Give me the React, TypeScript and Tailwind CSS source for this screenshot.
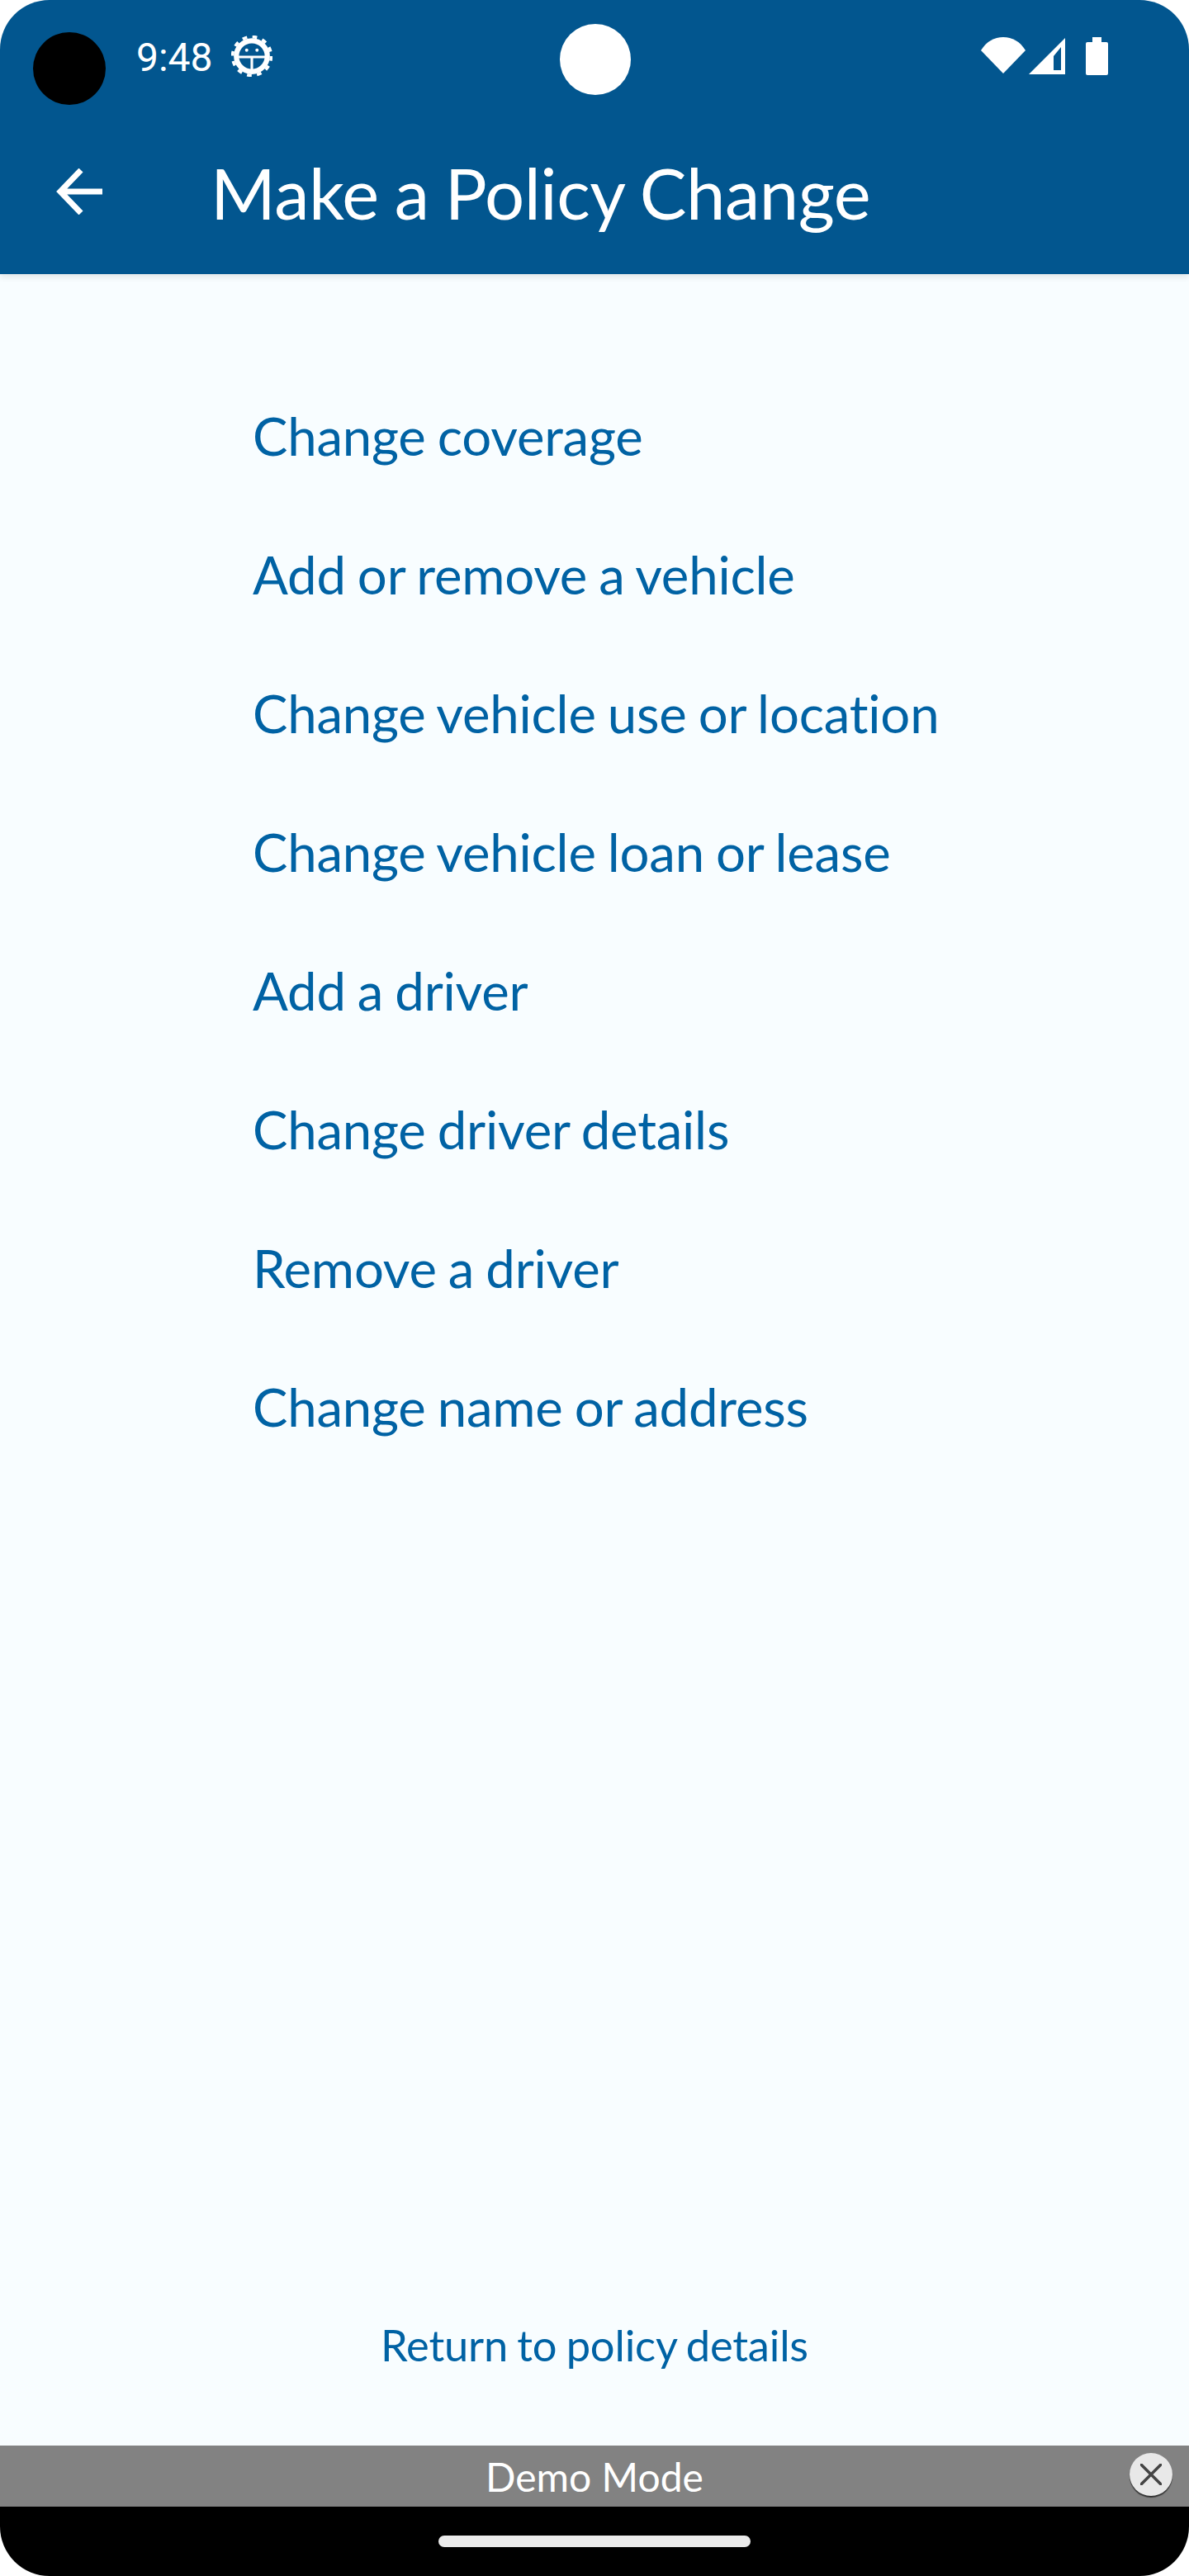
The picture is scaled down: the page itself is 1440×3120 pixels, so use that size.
const options = [
  "Change coverage",
  "Add or remove a vehicle",
  "Change vehicle use or location",
  "Change vehicle loan or lease",
  "Add a driver",
  "Change driver details",
  "Remove a driver",
  "Change name or address",
];

// android "bug report" status icon
const GearBug = () => (
  <svg viewBox="0 0 48 48" className="h-[50px] w-[50px]" fill="none" stroke="white">
    <circle cx="24" cy="24" r="18" strokeWidth="6" />
    <circle cx="24" cy="24" r="22.5" strokeWidth="3.5" strokeDasharray="5.5 6.28" />
    <path d="M8 25h32M24 25v17" strokeWidth="3" />
    <circle cx="18" cy="17" r="1.9" fill="white" stroke="none" />
    <circle cx="30" cy="17" r="1.9" fill="white" stroke="none" />
  </svg>
);

const StatusIcons = () => (
  <div className="flex items-start pr-[98px] pt-[45px]">
    <svg viewBox="0 0 54 44" className="h-[44px] w-[54px]" fill="white">
      <path d="M0 16C7 5 16 0 27 0s20 5 27 16L27 44z" />
    </svg>
    <svg viewBox="0 0 44 44" className="ml-[4px] mt-[1px] h-[44px] w-[44px]">
      <path fillRule="evenodd" fill="white" d="M44 0v44H0zM30 39h9V11L30 22z" />
    </svg>
    <svg viewBox="0 0 27 46" className="ml-[25px] h-[46px] w-[27px]" fill="white">
      <path d="M8 0h11v6h6a2 2 0 0 1 2 2v36a2 2 0 0 1-2 2H2a2 2 0 0 1-2-2V8a2 2 0 0 1 2-2h6z" />
    </svg>
  </div>
);

export default function App() {
  return (
    <div className="relative flex h-[3120px] w-[1440px] flex-col overflow-hidden rounded-[60px] bg-[#f8fdff] font-['Lato',sans-serif] [font-variant-ligatures:none]">
      {/* header */}
      <div className="z-10 h-[332px] shrink-0 bg-[#02568f] shadow-[0_3px_8px_rgba(0,0,0,0.1)]">
        <div className="relative flex h-[156px] justify-between">
          <div className="flex items-start pl-[40px] pt-[39px]">
            <div className="h-[88px] w-[88px] rounded-full bg-black" />
            <span className="ml-[37px] mt-[3px] font-['Roboto',sans-serif] text-[48px] leading-[56px] text-white">9:48</span>
            <div className="ml-[22px] mt-[4px]">
              <GearBug />
            </div>
          </div>
          <div className="absolute left-[678px] top-[29px] h-[86px] w-[86px] rounded-full bg-white" />
          <StatusIcons />
        </div>
        <div className="flex h-[176px] items-start pl-[68px] pt-[48px]">
          <svg viewBox="0 0 56 56" className="h-[56px] w-[56px]" fill="none" stroke="white" strokeWidth="7">
            <path d="M56 28H6M30 2L5 28l25 26" strokeLinejoin="miter" />
          </svg>
          <h1 className="ml-[131px] -mt-[21px] text-[85px] leading-[100px] font-normal tracking-[-0.5px] [word-spacing:-2px] text-white">Make a Policy Change</h1>
        </div>
      </div>

      {/* options */}
      <ul className="flex-1 pl-[306px] pt-[161px]">
        {options.map((option) => (
          <li key={option} className="h-[168px] text-[63.5px] leading-[70px] tracking-[-0.2px] [word-spacing:-2px] text-[#0062a4]">
            {option}
          </li>
        ))}
      </ul>

      <a className="h-[154px] shrink-0 text-center text-[52.5px] leading-[64px] tracking-[-0.2px] [word-spacing:-2px] text-[#0062a4]">Return to policy details</a>

      {/* demo bar */}
      <div className="relative h-[74px] shrink-0 bg-[#828282] text-center text-[48px] leading-[76px] text-white">
        Demo Mode
        <div className="absolute left-[1368px] top-[9px] flex h-[52px] w-[52px] items-center justify-center rounded-full bg-[#e8e8e8] shadow-[0_2px_1px_#333]">
          <svg viewBox="0 0 26 26" className="h-[26px] w-[26px]" fill="none" stroke="#444" strokeWidth="3.5" strokeLinecap="round">
            <path d="M1 1l24 24M25 1L1 25" />
          </svg>
        </div>
      </div>

      {/* nav bar */}
      <div className="flex h-[84px] shrink-0 justify-center bg-black pt-[35px]">
        <div className="h-[14px] w-[378px] rounded-full bg-[#ebebeb]" />
      </div>
    </div>
  );
}
